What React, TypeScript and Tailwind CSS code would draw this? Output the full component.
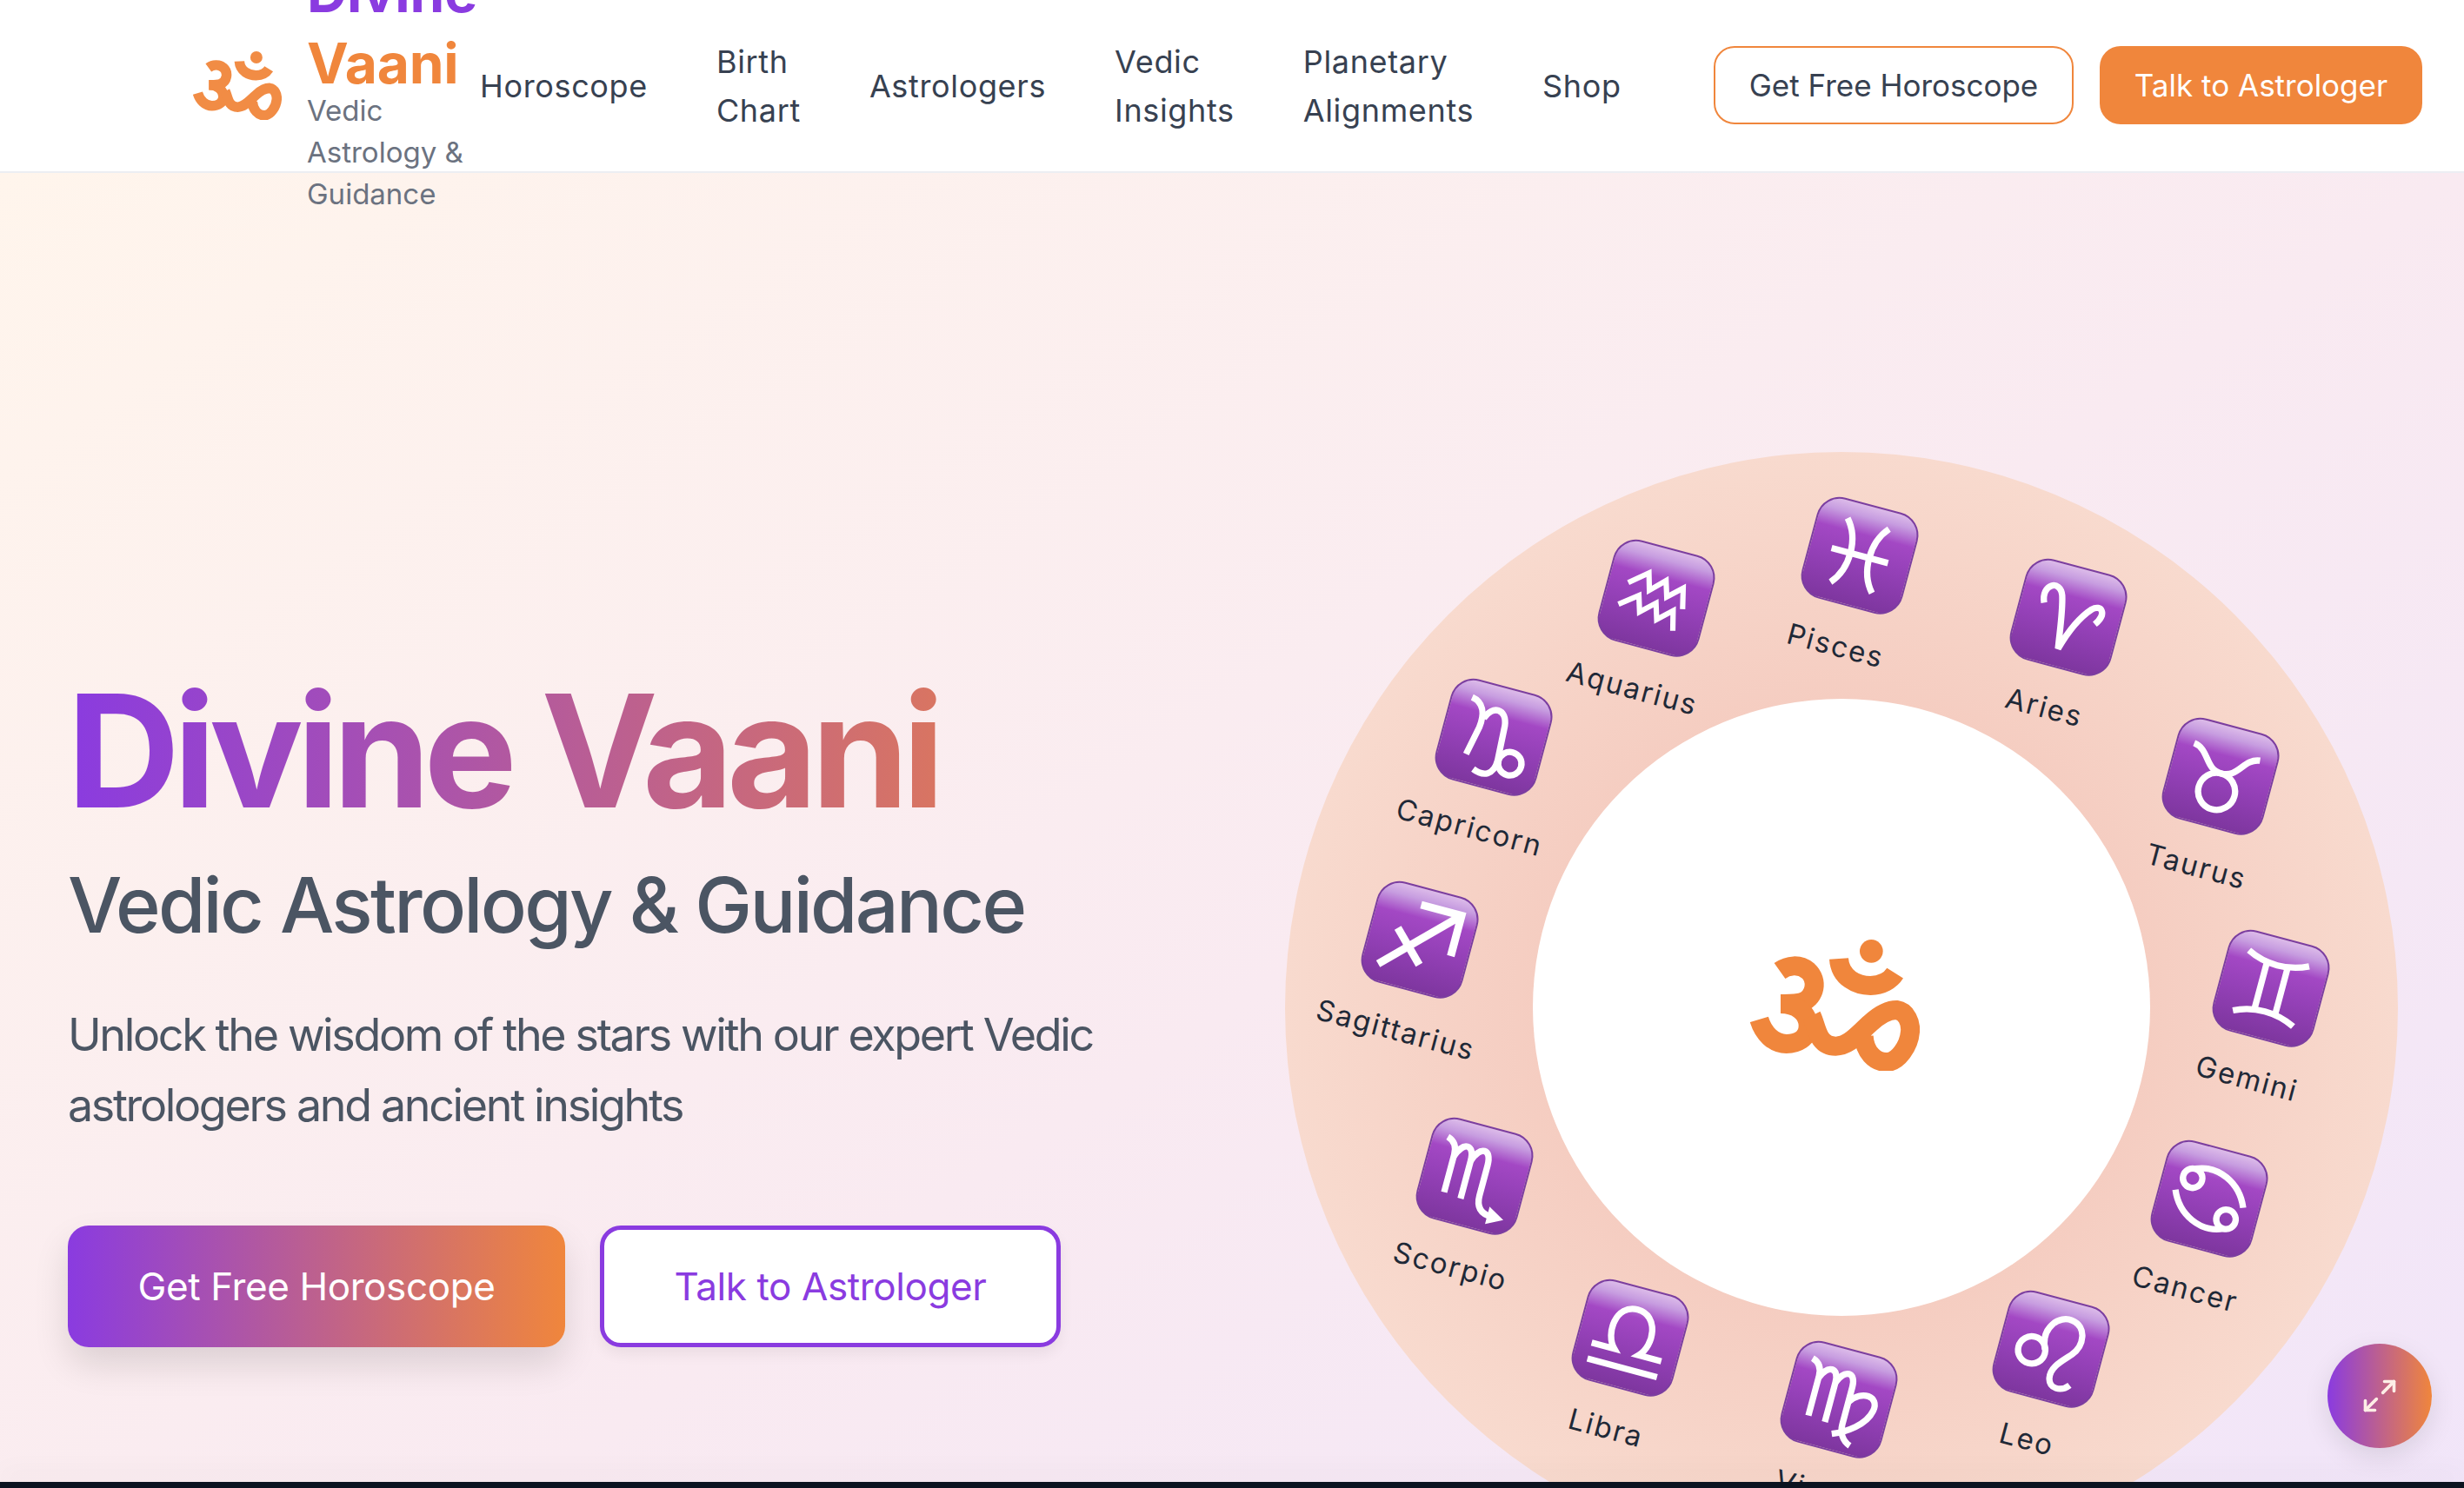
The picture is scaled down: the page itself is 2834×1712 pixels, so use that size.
import React from "react";
import { Maximize2 } from "lucide-react";

const navLinks = [
  ["Horoscope"],
  ["Birth", "Chart"],
  ["Astrologers"],
  ["Vedic", "Insights"],
  ["Planetary", "Alignments"],
  ["Shop"],
];

const OmMark: React.FC<{ className?: string }> = ({ className }) => (
  <svg viewBox="160 122 585 453" className={className} fill="none" stroke="currentColor" strokeWidth={66}>
    <circle cx={578} cy={162} r={40} fill="currentColor" stroke="none" />
    <path d="M466 188C470 255 530 281 575 281C615 280 645 262 660 238" />
    <path d="M262 230C290 210 330 205 360 230C395 262 385 320 340 338C320 345 290 344 265 344" />
    <path d="M265 344C320 344 360 375 360 420C360 465 320 482 285 482C240 482 205 445 191 398" />
    <path d="M372 385C390 420 390 490 455 490C500 490 530 450 575 410C610 378 640 365 665 365C700 370 715 410 712 440C708 490 670 545 630 545C590 545 555 510 552 455" />
  </svg>
);

const glyphs: Record<string, React.ReactNode> = {
  Pisces: (
    <>
      <path d="M28 16C44 34 44 66 28 84" />
      <path d="M72 16C56 34 56 66 72 84" />
      <path d="M20 50H80" />
    </>
  ),
  Aries: <path d="M22 42C14 24 32 14 38 30C43 46 45 66 48 84C54 62 62 46 71 36C79 28 88 36 78 50" />,
  Taurus: (
    <>
      <circle cx={50} cy={66} r={19} />
      <path d="M15 24C32 26 32 47 50 47C68 47 68 26 85 24" />
    </>
  ),
  Gemini: (
    <>
      <path d="M18 18C38 28 62 28 82 18" />
      <path d="M18 82C38 72 62 72 82 82" />
      <path d="M39 26V74M61 26V74" />
    </>
  ),
  Cancer: (
    <>
      <circle cx={28} cy={34} r={10} />
      <path d="M28 24C50 14 76 26 86 50" />
      <circle cx={72} cy={66} r={10} />
      <path d="M72 76C50 86 24 74 14 50" />
    </>
  ),
  Leo: (
    <>
      <circle cx={31} cy={56} r={14} />
      <path d="M44 52C34 30 50 14 63 16C80 18 82 38 72 50C63 60 54 68 56 79C58 90 71 90 78 81" />
    </>
  ),
  Virgo: (
    <>
      <path d="M13 16C20 18 24 23 24 32V74" />
      <path d="M24 34C30 18 42 18 42 34V76" />
      <path d="M42 34C48 18 60 18 60 34V74C60 82 64 90 73 93" />
      <path d="M60 50C70 34 90 36 87 52C84 68 66 80 52 86" />
    </>
  ),
  Libra: (
    <>
      <path d="M13 82H87" />
      <path d="M13 65H37C24 52 27 20 50 20C73 20 76 52 63 65H87" />
    </>
  ),
  Scorpio: (
    <>
      <path d="M13 18C20 20 24 25 24 34V74" />
      <path d="M24 36C30 18 42 18 42 36V76" />
      <path d="M42 36C48 18 60 18 60 36V68C60 80 66 86 78 86" />
      <path d="M74 78L88 86L74 93Z" fill="white" strokeWidth={2} />
    </>
  ),
  Sagittarius: (
    <>
      <path d="M15 85L82 18" strokeWidth={8} />
      <path d="M42 15H85V58" strokeWidth={8} />
      <path d="M25 44L56 75" strokeWidth={8} />
    </>
  ),
  Capricorn: (
    <>
      <path d="M18 16C30 18 35 28 33 44L27 74" />
      <path d="M35 34C40 18 56 18 58 36L60 72C60 88 50 92 38 87" />
      <circle cx={73} cy={72} r={12} />
    </>
  ),
  Aquarius: (
    <>
      <path d="M18 42L36 27L41 44L55 30L60 46L74 33L79 54" strokeWidth={5.5} />
      <path d="M14 66L32 52L37 68L51 55L56 71L70 58L75 78" strokeWidth={5.5} />
    </>
  ),
};

// tile offsets from the wheel centre, they are not evenly spaced in the picture
const signs: [string, number, number][] = [
  ["Pisces", 12, -487],
  ["Aries", 252, -416],
  ["Taurus", 427, -233],
  ["Gemini", 485, 11],
  ["Cancer", 414, 253],
  ["Leo", 232, 426],
  ["Virgo", -12, 484],
  ["Libra", -252, 413],
  ["Scorpio", -431, 227],
  ["Sagittarius", -494, -45],
  ["Capricorn", -409, -278],
  ["Aquarius", -222, -438],
];

const ZodiacWheel: React.FC = () => (
  <div className="relative h-[1280px] w-[1280px] shrink-0 rounded-full bg-[radial-gradient(circle_closest-side,#f5cdc1_55%,#f8dace_100%)]">
    <div className="absolute left-[285px] top-[284px] flex h-[710px] w-[710px] items-center justify-center rounded-full bg-white">
      <OmMark className="h-[151px] w-[195px] -translate-x-[8px] -translate-y-[3px] text-[#f0863c]" />
    </div>
    {signs.map(([name, dx, dy]) => (
      <div
        key={name}
        className="absolute flex w-[240px] flex-col items-center gap-[24px]"
        style={{
          left: 640 + dx,
          top: 640 + dy,
          transform: "translate(-50%, -50%) rotate(15deg)",
        }}
      >
        <div className="flex h-[120px] w-[120px] items-center justify-center rounded-[27px] border-2 border-[#7b3ea0] bg-[linear-gradient(180deg,#dcbbe9_0%,#c79de0_11%,#a348c4_29%,#9541b8_55%,#7e369f_100%)]">
          <svg viewBox="0 0 100 100" className="h-[112px] w-[112px]" fill="none" stroke="white" strokeWidth={6.5}>
            {glyphs[name]}
          </svg>
        </div>
        <span className="text-[33px] leading-[46px] tracking-[2px] text-[#1f2937]">{name}</span>
      </div>
    ))}
  </div>
);

export default function App() {
  return (
    <div className="relative flex h-screen w-screen flex-col overflow-hidden bg-white font-['Inter',sans-serif]">
      <header className="relative z-10 flex h-[199px] shrink-0 items-center justify-between border-b-2 border-[#eceef3] bg-white pl-[222px] pr-[48px]">
        <div className="flex items-center">
          <div className="flex items-center gap-[29px]">
            <OmMark className="h-[79px] w-[102px] text-[#f18c45]" />
            <div className="w-[182px]">
              <div className="text-[64px] font-bold leading-[82px] tracking-[-0.2px] text-[#8a3be0]">Divine</div>
              <div className="text-[64px] font-bold leading-[82px] tracking-[-0.2px] text-[#f0863c]">Vaani</div>
              <p className="-mt-[11px] text-[33px] leading-[48px] text-[#6b7280]">Vedic Astrology &amp; Guidance</p>
            </div>
          </div>
          <nav className="ml-[17px] flex items-center gap-[79px] text-[36px] leading-[56px] tracking-[0.65px] text-[#374151]">
            {navLinks.map((lines) => (
              <a key={lines[0]} className="flex flex-col">
                {lines.map((l) => (
                  <span key={l}>{l}</span>
                ))}
              </a>
            ))}
          </nav>
        </div>
        <div className="mb-[2px] flex gap-[30px] text-[35px] leading-[56px]">
          <button className="h-[90px] w-[414px] rounded-[24px] border-2 border-[#f0863c] bg-white text-[#374151]">Get Free Horoscope</button>
          <button className="h-[90px] w-[371px] rounded-[24px] bg-[#f0863c] text-white">Talk to Astrologer</button>
        </div>
      </header>

      <main className="relative min-h-0 flex-1 overflow-hidden">
        <div className="flex h-[1922px] items-center justify-between bg-[linear-gradient(to_bottom_right,#fff5ec_0%,#f9eaf1_50%,#efe4fb_100%)] pl-[78px] pr-[76px]">
          <div className="w-[1300px] pb-[7px]">
            <h1 className="-ml-[1px] bg-[linear-gradient(90deg,#8a3be0,#f0863c)] bg-clip-text text-[180px] font-bold leading-[200px] tracking-[-7.4px] text-transparent">
              Divine Vaani
            </h1>
            <h2 className="mt-[22px] text-[88px] font-medium leading-[110px] tracking-[-2.7px] text-[#4b5563]">Vedic Astrology &amp; Guidance</h2>
            <p className="mt-[54px] w-[1220px] text-[52px] leading-[81px] tracking-[-2.35px] text-[#4b5563]">
              Unlock the wisdom of the stars with our expert Vedic astrologers and ancient insights
            </p>
            <div className="mt-[98px] flex gap-[40px] text-[44px] tracking-[-0.4px]">
              <button className="h-[140px] w-[572px] rounded-[24px] bg-[linear-gradient(90deg,#8a3be0,#f0863c)] text-white shadow-[0_20px_40px_rgba(0,0,0,0.12)]">
                Get Free Horoscope
              </button>
              <button className="h-[140px] w-[530px] rounded-[24px] border-[5px] border-[#8a3be0] bg-white text-[#8a3be0] shadow-[0_8px_16px_rgba(0,0,0,0.06)]">
                Talk to Astrologer
              </button>
            </div>
          </div>
          <ZodiacWheel />
        </div>
      </main>
      <div className="relative z-10 h-[7px] shrink-0 bg-[#0b1320] shadow-[0_-8px_30px_rgba(0,0,0,0.08)]" />

      <button className="absolute bottom-[46px] right-[37px] z-20 flex h-[120px] w-[120px] items-center justify-center rounded-full bg-[linear-gradient(90deg,#8a3be0,#f0863c)] text-[#fdeee6] shadow-[0_10px_30px_rgba(0,0,0,0.1)]">
        <Maximize2 size={44} strokeWidth={2} />
      </button>
    </div>
  );
}
